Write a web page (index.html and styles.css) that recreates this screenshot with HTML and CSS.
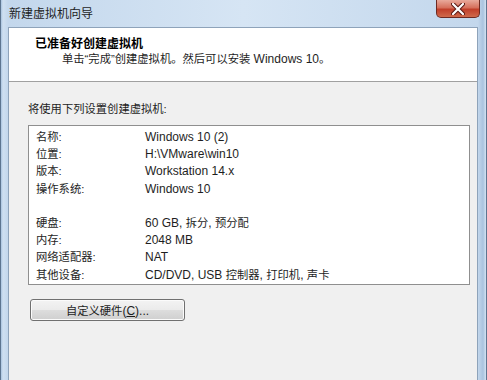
FILE: index.html
```html
<!DOCTYPE html>
<html lang="zh-CN">
<head>
    <meta charset="UTF-8">
    <meta name="viewport" content="width=device-width, initial-scale=1.0">
    <title>新建虚拟机向导</title>
    <link rel="stylesheet" href="styles.css">
</head>
<body>

<div class="finestra">
    <div class="barra-titolo">
        <span class="titolo">新建虚拟机向导</span>
        <div class="chiudi">
            <svg width="14" height="12" viewBox="0 0 14 12">
                <path d="M2 1 L12 11 M12 1 L2 11" stroke="#5a1a14" stroke-width="4.2" stroke-linecap="round"/>
                <path d="M2 1 L12 11 M12 1 L2 11" stroke="#ffffff" stroke-width="2.2" stroke-linecap="round"/>
            </svg>
        </div>
    </div>

    <div class="contenuto">
        <div class="intestazione">
            <div class="titolo-pagina">已准备好创建虚拟机</div>
            <div class="sottotitolo"><span class="zh">单击“完成”创建虚拟机。然后可以安装</span> Windows 10<span class="zh">。</span></div>
        </div>

        <div class="corpo">
            <div class="intro zh">将使用下列设置创建虚拟机:</div>

            <div class="riepilogo">
                <div class="riga"><span class="nome zh">名称:</span><span>Windows 10 (2)</span></div>
                <div class="riga"><span class="nome zh">位置:</span><span>H:\VMware\win10</span></div>
                <div class="riga"><span class="nome zh">版本:</span><span>Workstation 14.x</span></div>
                <div class="riga"><span class="nome zh">操作系统:</span><span>Windows 10</span></div>
                <div class="riga"></div>
                <div class="riga"><span class="nome zh">硬盘:</span><span>60 GB, <span class="zh">拆分</span>, <span class="zh">预分配</span></span></div>
                <div class="riga"><span class="nome zh">内存:</span><span>2048 MB</span></div>
                <div class="riga"><span class="nome zh">网络适配器:</span><span>NAT</span></div>
                <div class="riga"><span class="nome zh">其他设备:</span><span>CD/DVD, USB <span class="zh">控制器</span>, <span class="zh">打印机</span>, <span class="zh">声卡</span></span></div>
            </div>

            <button class="pulsante"><span class="zh">自定义硬件</span>(<u>C</u>)...</button>
        </div>
    </div>
</div>

</body>
</html>
```

FILE: styles.css
```css
body {
    margin: 0;
    font-family: "Liberation Sans", "Noto Sans CJK SC", sans-serif;
    font-size: 12px;
    color: #1e1e1e;
}
.zh {
    font-size: 11.3px;
}
.finestra {
    width: 487px;
    height: 380px;
    box-sizing: border-box;
    display: flex;
    flex-direction: column;
    padding: 0 8px 0 7px;
    background: linear-gradient(90deg, #a9c3df 0px, #cfe0f1 2px, #c3d7ec 7px, #d6e5f4 50%, #c3d7ec calc(100% - 8px), #a9c3df calc(100% - 3px), #d2e2f2 100%);
    border-left: 1px solid #5d7590;
    border-right: 1px solid #5d7590;
}
.barra-titolo {
    height: 27px;
    display: flex;
    justify-content: space-between;
    align-items: flex-start;
}
.titolo {
    padding-top: 6px;
    padding-left: 1px;
    line-height: 16px;
    color: #1e1e1e;
}
.chiudi {
    width: 44px;
    height: 18px;
    box-sizing: border-box;
    margin-right: -2px;
    display: flex;
    justify-content: center;
    align-items: center;
    border: 1px solid #6d2a22;
    border-top: none;
    border-radius: 0 0 5px 5px;
    background: linear-gradient(180deg, #e9a99b 0%, #d6705c 45%, #c13f2a 55%, #cf6a4c 100%);
}
.contenuto {
    flex: 1;
    display: flex;
    flex-direction: column;
    border: 1px solid #8ea3ba;
    border-bottom: none;
    background-color: #f0f0f0;
}
.intestazione {
    height: 54px;
    box-sizing: border-box;
    background-color: #ffffff;
    border-bottom: 1px solid #a0a0a0;
    padding: 8px 0 0 26px;
    line-height: 16px;
}
.titolo-pagina {
    font-weight: bold;
    color: #000000;
}
.sottotitolo {
    padding-left: 27px;
    margin-top: -1px;
}
.corpo {
    padding: 19px 0 0 19px;
}
.intro {
    line-height: 16px;
}
.riepilogo {
    width: 442px;
    box-sizing: border-box;
    margin-top: 8px;
    padding: 3px 0 0 7px;
    background-color: #ffffff;
    border: 1px solid #8f8f8f;
}
.riga {
    display: flex;
    align-items: center;
    height: 17.2px;
    line-height: 17.2px;
}
.nome {
    width: 109px;
    flex-shrink: 0;
}
.pulsante {
    display: block;
    width: 155px;
    height: 22px;
    margin: 14px 0 0 2px;
    padding: 0;
    font-family: "Liberation Sans", "Noto Sans CJK SC", sans-serif;
    font-size: 12px;
    color: #1e1e1e;
    border: 1px solid #707070;
    border-radius: 3px;
    background: linear-gradient(180deg, #f3f3f3 0%, #ebebeb 48%, #dddddd 52%, #cfcfcf 100%);
    box-shadow: inset 0 0 0 1px #fbfbfb;
    cursor: pointer;
}
```
